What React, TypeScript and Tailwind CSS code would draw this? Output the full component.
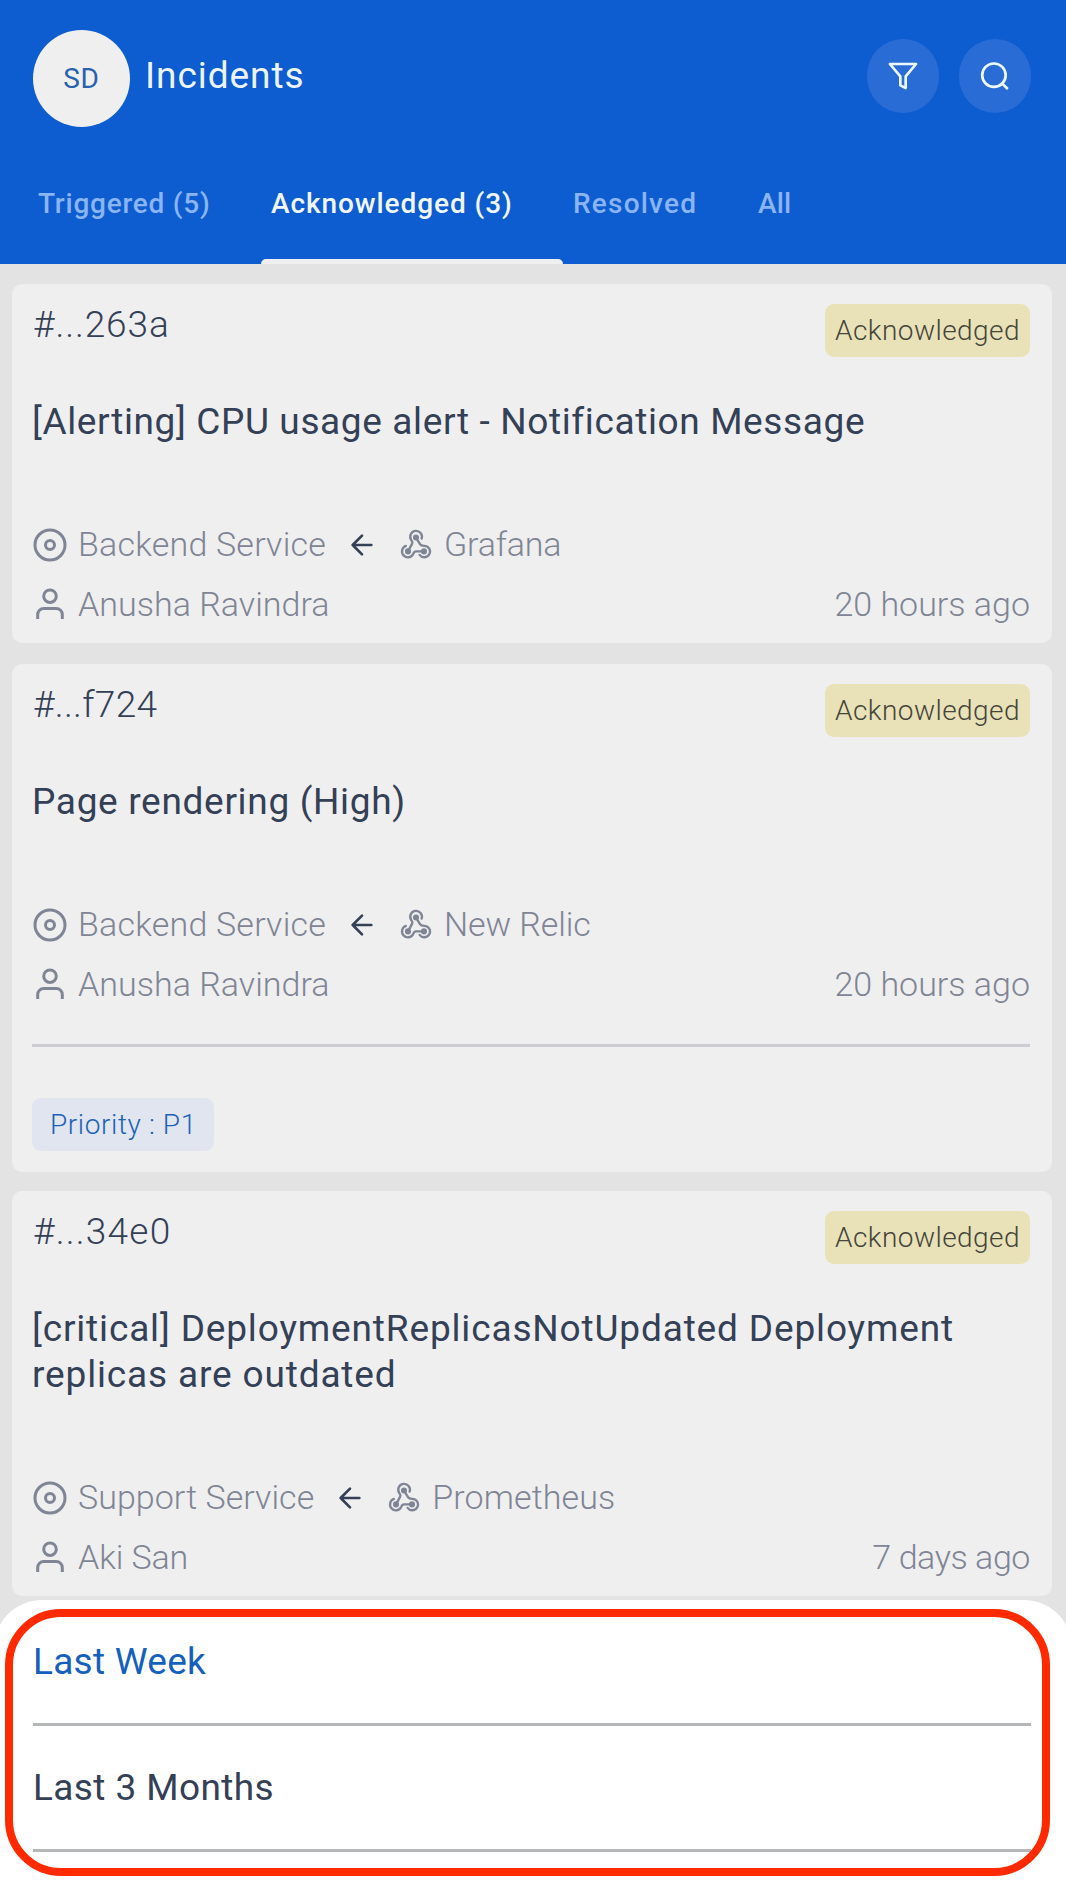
type IncidentData = {
  id: string;
  idClass: string;
  title: string;
  titleClass: string;
  service: string;
  serviceClass: string;
  source: string;
  sourceClass: string;
  assignee: string;
  assigneeClass: string;
  age: string;
  ageClass: string;
  tag?: string;
};

const incidents: IncidentData[] = [
  {
    id: "#...263a",
    idClass: "tracking-[0.9px]",
    title: "[Alerting] CPU usage alert - Notification Message",
    titleClass: "tracking-[0.63px]",
    service: "Backend Service",
    serviceClass: "tracking-[0.2px]",
    source: "Grafana",
    sourceClass: "tracking-[-0.2px]",
    assignee: "Anusha Ravindra",
    assigneeClass: "tracking-[0.02px]",
    age: "20 hours ago",
    ageClass: "",
  },
  {
    id: "#...f724",
    idClass: "tracking-[0.3px]",
    title: "Page rendering (High)",
    titleClass: "tracking-[0.68px]",
    service: "Backend Service",
    serviceClass: "tracking-[0.2px]",
    source: "New Relic",
    sourceClass: "tracking-[-0.1px]",
    assignee: "Anusha Ravindra",
    assigneeClass: "tracking-[0.02px]",
    age: "20 hours ago",
    ageClass: "",
    tag: "Priority : P1",
  },
  {
    id: "#...34e0",
    idClass: "tracking-[1.2px]",
    title: "[critical] DeploymentReplicasNotUpdated Deployment replicas are outdated",
    titleClass: "tracking-[0.85px]",
    service: "Support Service",
    serviceClass: "tracking-[0.04px]",
    source: "Prometheus",
    sourceClass: "tracking-[0.1px]",
    assignee: "Aki San",
    assigneeClass: "tracking-[-0.1px]",
    age: "7 days ago",
    ageClass: "tracking-[-0.42px]",
  },
];

const stroke = {
  viewBox: "0 0 24 24",
  fill: "none",
  stroke: "currentColor",
  strokeWidth: 2,
  strokeLinecap: "round" as const,
  strokeLinejoin: "round" as const,
};

function FilterIcon() {
  return (
    <svg {...stroke} className="size-8">
      <path d="M21.8 3H2.2L10 12.3V19l4 2v-8.7L21.8 3z" />
    </svg>
  );
}

function SearchIcon() {
  return (
    <svg {...stroke} className="size-8">
      <circle cx="11.2" cy="11.4" r="8.8" />
      <path d="M21 21.2l-3.7-3.7" />
    </svg>
  );
}

function ServiceIcon() {
  return (
    <svg {...stroke} className="mt-[2px] size-9 shrink-0">
      <circle cx="12" cy="12" r="10" />
      <circle cx="12" cy="12" r="3" />
    </svg>
  );
}

function UserIcon() {
  return (
    <svg {...stroke} strokeLinecap="butt" className="size-9 shrink-0">
      <path d="M20.2 22v-3a4 4 0 0 0-4-4H7.8a4 4 0 0 0-4 4v3" />
      <circle cx="12" cy="6.8" r="4.2" />
    </svg>
  );
}

function ArrowIcon() {
  return (
    <svg {...stroke} className="mt-[2px] size-8 shrink-0 text-[#334056]">
      <path d="M19 12H5M12 19l-7-7 7-7" />
    </svg>
  );
}

function WebhookIcon() {
  return (
    <svg {...stroke} strokeWidth={1.75} className="mt-[2px] size-8 shrink-0">
      <path d="M18 16.8h-5.99c-1.1 0-1.7.9-2.1 1.9A4.4 4.4 0 1 1 4.4 12.7" />
      <path d="m6 16.8 3.13-5.8c.53-.97.1-1.7-.6-2.6a4.4 4.4 0 1 1 7.7-1.2" />
      <path d="m12 6.4 3.13 5.2c.53.9 1.7 1 2.87 1a4.3 4.3 0 1 1-3.3 6.8" />
      <circle cx="6" cy="16.8" r="1.4" fill="currentColor" />
      <circle cx="18" cy="16.8" r="1.4" fill="currentColor" />
      <circle cx="12" cy="6.4" r="1.4" fill="currentColor" />
    </svg>
  );
}

function IncidentCard({ data }: { data: IncidentData }) {
  return (
    <article className="rounded-[10px] bg-[#efeff0] pt-5 pr-[22px] pb-[10px] pl-5">
      <div className="flex h-[54px] items-start justify-between">
        <span className={`ml-px text-[37px] leading-[42px] font-light text-[#334056] ${data.idClass}`}>{data.id}</span>
        <span className="h-[53px] w-[205px] rounded-[9px] bg-[#e9e2b8] text-center text-[28px] leading-[54px] font-light tracking-[0.43px] text-[#45453a]">
          Acknowledged
        </span>
      </div>
      <h2 className={`mt-[41px] text-[37px] leading-[46px] text-[#334056] ${data.titleClass}`}>{data.title}</h2>
      <div className="mt-[69px] flex h-[60px] items-center text-[34px] font-light text-[#7f8594]">
        <ServiceIcon />
        <span className={`ml-[10px] leading-[60px] ${data.serviceClass}`}>{data.service}</span>
        <span className="mx-5 flex">
          <ArrowIcon />
        </span>
        <span className="ml-[2px] flex">
          <WebhookIcon />
        </span>
        <span className={`ml-3 leading-[60px] ${data.sourceClass}`}>{data.source}</span>
      </div>
      <div className="flex h-[59px] items-center text-[34px] font-light text-[#7f8594]">
        <UserIcon />
        <span className={`ml-[10px] leading-[58px] ${data.assigneeClass}`}>{data.assignee}</span>
        <span className={`ml-auto leading-[58px] ${data.ageClass}`}>{data.age}</span>
      </div>
      {data.tag && (
        <>
          <div className="mt-[31px] h-[3px] bg-[#cdccd3]" />
          <div className="mt-[51px] mb-[11px] h-[53px] w-[182px] rounded-[9px] bg-[#e1e5ef] pl-[18px] text-[28px] leading-[54px] font-light tracking-[0.6px] text-[#1c62b8]">
            {data.tag}
          </div>
        </>
      )}
    </article>
  );
}

function Header() {
  return (
    <header className="flex h-[264px] flex-col bg-[#0d5dd0]">
      <div className="flex h-[143px] items-start pt-[30px] pr-[35px] pl-[33px]">
        <div className="flex size-[97px] items-center justify-center rounded-full bg-[#efeff0] text-[28px] tracking-[0.8px] text-[#2862ae]">
          SD
        </div>
        <h1 className="ml-[15px] text-[37px] leading-[91px] tracking-[0.95px] text-[#eef4fd]">Incidents</h1>
        <div className="mt-[9px] ml-auto flex gap-5 text-[#eef8ff]">
          <button className="flex h-[74px] w-[72px] items-center justify-center rounded-full bg-[#296cd6]">
            <FilterIcon />
          </button>
          <button className="flex h-[74px] w-[72px] items-center justify-center rounded-full bg-[#296cd6]">
            <SearchIcon />
          </button>
        </div>
      </div>
      <nav className="flex h-[121px] text-[28px] leading-[122px] font-medium whitespace-nowrap text-[#8bb4f2]">
        <div className="w-[261px] pl-[38px] tracking-[0.76px]">Triggered (5)</div>
        <div className="flex w-[302px] flex-col text-[#f2f6fd]">
          <span className="h-[116px] pl-[10px] tracking-[0.92px]">Acknowledged (3)</span>
          <span className="h-[5px] rounded-t-[5px] bg-[#efeff0]" />
        </div>
        <div className="w-[184px] pl-[10px] tracking-[1.2px]">Resolved</div>
        <div className="pl-[11px] tracking-[0.15px]">All</div>
      </nav>
    </header>
  );
}

export default function App() {
  return (
    <div className="relative h-[1900px] w-[1066px] overflow-hidden bg-[#e3e3e3] font-['Roboto',sans-serif]">
      <Header />
      <main className="flex flex-col gap-5 pt-5 pr-[14px] pl-3">
        {incidents.map((item, i) => (
          <div key={item.id} className={i === 1 ? "mt-px mb-[-1px]" : ""}>
            <IncidentCard data={item} />
          </div>
        ))}
      </main>
      <section className="relative mx-[-6px] mt-1 h-[310px] rounded-t-[48px] bg-white pr-[41px] pl-[39px] text-[37px]">
        <div className="flex h-[126px] items-center border-b-[3px] border-[#b5b7b9] tracking-[0.26px] text-[#1560bd]">
          Last Week
        </div>
        <div className="flex h-[126px] items-center border-b-[3px] border-[#b5b7b9] tracking-[0.4px] text-[#334056]">
          Last 3 Months
        </div>
        <div className="absolute top-[9px] left-[11px] h-[267px] w-[1045px] rounded-[56px] border-8 border-[#ff2a00]" />
      </section>
    </div>
  );
}
